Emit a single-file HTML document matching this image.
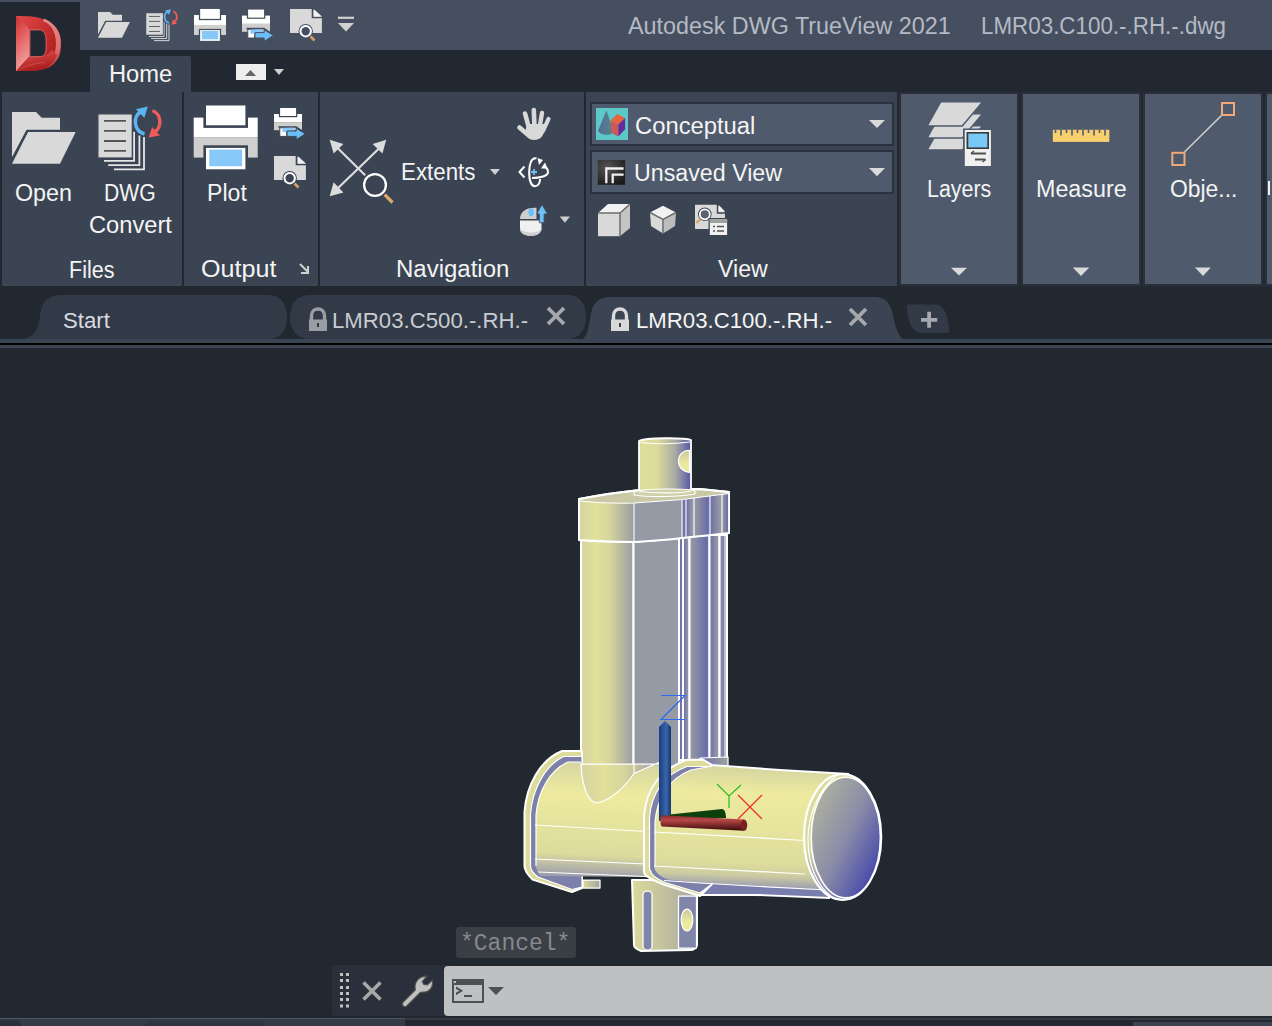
<!DOCTYPE html>
<html><head><meta charset="utf-8">
<style>
*{margin:0;padding:0;box-sizing:border-box}
html,body{width:1272px;height:1026px;overflow:hidden;background:#212830;font-family:"Liberation Sans",sans-serif}
.a{position:absolute}
.t{position:absolute;font-size:23px;line-height:23px;color:#f4f4f4;white-space:nowrap}
svg{position:absolute;overflow:visible}
</style></head><body>
<!-- title bar -->
<div class="a" style="left:0;top:0;width:1272px;height:50px;background:#464f60"></div>
<div class="a" style="left:0;top:50px;width:1272px;height:42px;background:#222832"></div>
<div class="a" style="left:0;top:2px;width:80px;height:48px;background:#222832"></div>
<div class="t" style="left:628px;top:15px;color:#b4bac4;transform:scaleX(1.015);transform-origin:0 0">Autodesk DWG TrueView 2021</div>
<div class="t" style="left:981px;top:15px;color:#b4bac4;transform:scaleX(0.973);transform-origin:0 0">LMR03.C100.-.RH.-.dwg</div>

<!-- home tab -->
<div class="a" style="left:90px;top:56px;width:101px;height:36px;background:#3b4453;border-radius:2px 2px 0 0"></div>
<div class="t" style="left:109px;top:63px;transform:scaleX(1.03);transform-origin:0 0">Home</div>
<div class="a" style="left:236px;top:64px;width:30px;height:16px;background:#eeeeee"></div>

<!-- ribbon panels -->
<div class="a" style="left:2px;top:92px;width:180px;height:194px;background:#3b4453"></div>
<div class="a" style="left:184px;top:92px;width:134px;height:194px;background:#3b4453"></div>
<div class="a" style="left:320px;top:92px;width:264px;height:194px;background:#3b4453"></div>
<div class="a" style="left:586px;top:92px;width:311px;height:194px;background:#3b4453"></div>
<div class="a" style="left:899px;top:92px;width:120px;height:194px;background:#4f5a6d;border:2px solid #2a2f3a"></div>
<div class="a" style="left:1021px;top:92px;width:120px;height:194px;background:#4f5a6d;border:2px solid #2a2f3a"></div>
<div class="a" style="left:1143px;top:92px;width:120px;height:194px;background:#4f5a6d;border:2px solid #2a2f3a"></div>
<div class="a" style="left:1265px;top:92px;width:20px;height:194px;background:#4f5a6d;border:2px solid #2a2f3a"></div>

<div class="t" style="left:15px;top:182px;transform:scaleX(1.013);transform-origin:0 0">Open</div>
<div class="t" style="left:104px;top:182px;transform:scaleX(0.92);transform-origin:0 0">DWG</div>
<div class="t" style="left:89px;top:214px;transform:scaleX(1.03);transform-origin:0 0">Convert</div>
<div class="t" style="left:69px;top:259px;transform:scaleX(0.935);transform-origin:0 0">Files</div>
<div class="t" style="left:207px;top:182px;transform:scaleX(1.004);transform-origin:0 0">Plot</div>
<div class="t" style="left:201px;top:258px;transform:scaleX(1.092);transform-origin:0 0">Output</div>
<div class="t" style="left:401px;top:161px;transform:scaleX(0.97);transform-origin:0 0">Extents</div>
<div class="t" style="left:396px;top:258px;transform:scaleX(1.043);transform-origin:0 0">Navigation</div>
<div class="t" style="left:718px;top:258px;transform:scaleX(1.007);transform-origin:0 0">View</div>
<div class="t" style="left:927px;top:178px;transform:scaleX(0.931);transform-origin:0 0">Layers</div>
<div class="t" style="left:1036px;top:178px;transform:scaleX(1.013);transform-origin:0 0">Measure</div>
<div class="t" style="left:1170px;top:178px;transform:scaleX(0.995);transform-origin:0 0">Obje...</div>

<!-- combos -->
<div class="a" style="left:590px;top:102px;width:304px;height:44px;background:#4f5a6d;border:2px solid #2b323d"></div>
<div class="a" style="left:590px;top:150px;width:304px;height:44px;background:#4f5a6d;border:2px solid #2b323d"></div>
<div class="t" style="left:635px;top:115px;transform:scaleX(1.034);transform-origin:0 0">Conceptual</div>
<div class="t" style="left:634px;top:162px;transform:scaleX(1.01);transform-origin:0 0">Unsaved View</div>

<div class="a" style="left:1268px;top:181px;width:2.2px;height:14px;background:#f0f0f0"></div>
<!-- doc tabs -->
<div class="a" style="left:0;top:339px;width:1272px;height:4px;background:#3b4453"></div>
<div class="a" style="left:0;top:343px;width:1272px;height:1.5px;background:#000"></div>
<div class="a" style="left:0;top:344.5px;width:1272px;height:3.5px;background:#3b4453"></div>
<svg width="1272" height="1026" style="left:0;top:0">
<path d="M20,339 C34,339 38,330 40,316 C42,302 47,295 62,295 L268,295 C281,295 287,304 287,317 C287,331 280,339 268,339 Z" fill="#323a47"/>
<path d="M290,317 C290,303 297,295 311,295 L567,295 C580,295 586,304 586,317 C586,331 579,339 566,339 L311,339 C297,339 290,331 290,317 Z" fill="#323a47"/>
<path d="M572,343 C585,343 588,333 590,319 C592,304 597,297 612,297 L874,297 C887,297 891,305 893,315 C896,330 900,343 912,343 Z" fill="#3b4453"/>
<path d="M907,304.5 L934,304.5 C944,304.5 949,315 949,332.8 L922,332.8 C912,332.8 907,322 907,304.5 Z" fill="#323a47"/>
</svg>
<div class="t" style="left:63px;top:309px;font-size:22.2px;color:#d9dce0">Start</div>
<div class="t" style="left:332px;top:309px;font-size:22.2px;color:#c8ccd2">LMR03.C500.-.RH.-</div>
<div class="t" style="left:636px;top:309px;font-size:22.2px">LMR03.C100.-.RH.-</div>

<!-- model -->
<svg width="1272" height="1026" style="left:0;top:0" viewBox="0 0 1272 1026">
<defs>
<linearGradient id="gcap" x1="0" x2="1" y1="0" y2="0">
<stop offset="0" stop-color="#e0de9c"/><stop offset="0.35" stop-color="#dcdb9b"/><stop offset="0.7" stop-color="#a8aaa4"/><stop offset="1" stop-color="#5456a8"/></linearGradient>
<linearGradient id="gcyl" x1="0" x2="1" y1="0" y2="0">
<stop offset="0" stop-color="#d6d4a2"/><stop offset="0.3" stop-color="#e2e09b"/><stop offset="0.55" stop-color="#d6d59c"/><stop offset="1" stop-color="#9a9ca4"/></linearGradient>
<linearGradient id="grib" x1="0" x2="1" y1="0" y2="0">
<stop offset="0" stop-color="#999ca4"/><stop offset="0.85" stop-color="#6a6ea8"/><stop offset="1" stop-color="#7a7eaa"/></linearGradient>
<linearGradient id="grib2" x1="0" x2="1" y1="0" y2="0">
<stop offset="0" stop-color="#6a6ea8"/><stop offset="1" stop-color="#a0a2a4"/></linearGradient>
<linearGradient id="gbodyL" gradientUnits="userSpaceOnUse" x1="590" y1="760" x2="585" y2="878">
<stop offset="0" stop-color="#d5d4a2"/><stop offset="0.3" stop-color="#eeeb9f"/><stop offset="0.55" stop-color="#e4e39d"/><stop offset="0.8" stop-color="#dcdb9c"/><stop offset="0.92" stop-color="#b3b3a8"/><stop offset="1" stop-color="#9a9bac"/></linearGradient>
<linearGradient id="gbody" gradientUnits="userSpaceOnUse" x1="750" y1="770" x2="746" y2="887">
<stop offset="0" stop-color="#d8d7a0"/><stop offset="0.2" stop-color="#eeeb9f"/><stop offset="0.5" stop-color="#e6e49d"/><stop offset="0.8" stop-color="#dddc9c"/><stop offset="0.9" stop-color="#cbcba2"/><stop offset="1" stop-color="#9c9db0"/></linearGradient>
<linearGradient id="grim" x1="0" y1="0" x2="0" y2="1"><stop offset="0" stop-color="#dddc9c"/><stop offset="0.6" stop-color="#d8d8a0"/><stop offset="0.85" stop-color="#9a9bb0"/><stop offset="1" stop-color="#7a7eac"/></linearGradient>
<linearGradient id="gend" x1="0.1" y1="0.15" x2="0.9" y2="0.85">
<stop offset="0" stop-color="#aeb0a0"/><stop offset="0.5" stop-color="#8a8ca8"/><stop offset="1" stop-color="#4648aa"/></linearGradient>
<linearGradient id="gpost" x1="0" x2="1" y1="0" y2="0">
<stop offset="0" stop-color="#dcdb9a"/><stop offset="1" stop-color="#a3a4a2"/></linearGradient>
<linearGradient id="gz" x1="0" x2="1" y1="0" y2="0">
<stop offset="0" stop-color="#173d80"/><stop offset="0.6" stop-color="#3a66aa"/><stop offset="1" stop-color="#16356e"/></linearGradient>
<linearGradient id="gx" x1="0" x2="0" y1="0" y2="1">
<stop offset="0" stop-color="#8a2a2a"/><stop offset="0.3" stop-color="#b84848"/><stop offset="1" stop-color="#3a0808"/></linearGradient>
<linearGradient id="ghole" x1="0" x2="0" y1="0" y2="1">
<stop offset="0" stop-color="#c8c89a"/><stop offset="0.6" stop-color="#ecea9e"/><stop offset="1" stop-color="#ecea9e"/></linearGradient>
</defs>
<g stroke="#ffffff" stroke-width="2" stroke-linejoin="round">
<!-- housing lower -->
<rect x="581" y="535" width="52.5" height="232" fill="url(#gcyl)"/>
<rect x="633.5" y="535" width="45.5" height="232" fill="#959aa5"/>
<rect x="679" y="535" width="4" height="225" fill="#7075aa"/>
<rect x="683" y="535" width="6.5" height="225" fill="url(#grib2)"/>
<rect x="689.5" y="535" width="20" height="225" fill="url(#grib)"/>
<rect x="709.5" y="535" width="10" height="225" fill="url(#grib2)"/>
<rect x="719.5" y="535" width="7.5" height="225" fill="url(#grib)"/>
<path d="M581,541 L581,764 M633.5,542 L633.5,764 M679,538 L679,760 M683,538 L683,760 M689.5,537 L689.5,760 M709.5,535 L709.5,760 M719.5,534 L719.5,758 M725,534 L725,757 M727,533 L727,757" fill="none" stroke-width="1.1"/>
<!-- top band -->
<path d="M579,499 C600,495 620,492 640,490 L700,489 L729,492 L729,533 C700,536 660,541 634,542 C615,542 595,541 579,540 Z" fill="#c9c9a6"/>
<path d="M579,501 C600,503 620,503.5 634,503 L634,542 C615,542 595,541 579,540 Z" fill="url(#gcyl)" stroke="none"/>
<path d="M634,503 L682,499.5 L682,538 L634,542 Z" fill="#959aa5" stroke="none"/>
<path d="M682,499.5 L686,499.0 L686,537.1 L682,537.4 Z" fill="#7075aa" stroke="none"/>
<path d="M686,499.0 L694,498.0 L694,536.3 L686,537.1 Z" fill="url(#grib2)" stroke="none"/>
<path d="M694,498.0 L710,495.9 L710,534.8 L694,536.3 Z" fill="url(#grib)" stroke="none"/>
<path d="M710,495.9 L722,494.4 L722,533.6 L710,534.8 Z" fill="url(#grib2)" stroke="none"/>
<path d="M722,494.4 L729,493.5 L729,533.0 L722,533.6 Z" fill="url(#grib)" stroke="none"/>

<path d="M579,499 C600,495 620,492 640,490 L700,489 L729,492 L729,533 C700,536 660,541 634,542 C615,542 595,541 579,540 Z" fill="none" stroke-width="1.8"/>
<path d="M580,501 C600,503 620,503.5 634,503 L682,499.5 L729,493.5" fill="none" stroke-width="1.1"/>
<path d="M634,503 L634,542 M682,499.5 L682,538 M686,499 L686,538 M694,498 L694,537 M710,496 L710,535 M722,494 L722,534" fill="none" stroke-width="1.1"/>
<!-- top cap -->
<path d="M639,441 C645,437.5 685,437.5 691,440 L691,491 L639,491 Z" fill="url(#gcap)" stroke-width="1.8"/>
<path d="M641,442.5 C655,444 675,444 690,442" fill="none" stroke-width="1.1"/>
<path d="M678.5,461 C678.5,454 684,450 689.5,450.5 L689.5,472.5 C684,472 678.5,468 678.5,461 Z" fill="url(#ghole)" stroke-width="1.25"/>
<path d="M634,492 C640,488.5 690,488 695,491 L695,494 C680,497 650,497.5 634,495 Z" fill="#cfcfa8" stroke-width="1.1"/>
<path d="M639,491.5 C655,493.5 680,493.5 691,491" fill="none" stroke-width="1.2"/>
<!-- base step -->
<path d="M700,758 L728,757 L728,766 L710,766 Z" fill="url(#grib2)" stroke-width="1.25"/>
<!-- body -->
<!-- lower post -->
<path d="M632,880 L700,880 L697,896 L697,945 C696,949 694,950 690,950 L641,951 C636,949 634,947 634,945 Z" fill="url(#gpost)"/>
<rect x="643" y="891" width="9" height="59" rx="4" fill="#8085aa" stroke-width="1.25"/>
<rect x="678.5" y="896" width="18" height="52" fill="#8085aa" stroke-width="1.25"/>
<ellipse cx="687" cy="920" rx="5.8" ry="11" fill="url(#ghole)" stroke-width="1.25"/>
<!-- left flange outer -->
<path d="M524.5,866 L524.5,812 C526.5,785 540,760 562,751 L582,751 L582,888 L572,892 L532.6,879.6 C528,875 524.5,870 524.5,866 Z" fill="#dcdb9c" stroke-width="2"/>
<path d="M530.5,866 L530.5,814 C532.5,788 545.5,765.5 563.5,756.5 L582,756.5 L582,887 L572,889.5 L538,877 C534,874 530.5,870 530.5,866 Z" fill="#7d81aa" stroke-width="1.2"/>
<!-- body left segment -->
<path d="M536,866 L536,815 C538,791 550,770 568,762 L581,762 L581,764 L640,765 L700,766 L700,884 L644,877 L540,876 C538,872 536,869 536,866 Z" fill="url(#gbodyL)" stroke="none"/>
<path d="M536,866 L536,815 C538,791 550,770 568,762 L581,762" fill="none" stroke-width="1.2"/>
<!-- saddle -->
<path d="M581,764 C582,790 590,803 597,803 C610,801 625,787 634,773.5 L660,762 L660,764 L634,764 Z" fill="url(#gcyl)" stroke-width="1.25"/>
<path d="M634,764 L634,773" fill="none" stroke-width="1.25"/>
<path d="M583,880 L600,880 L600,888 L583,888 Z" fill="url(#gpost)" stroke-width="1.25"/>
<path d="M535,825 L646,831.5" fill="none" stroke-width="1.25"/>
<path d="M535,859 L646,864" fill="none" stroke-width="1.25"/>
<path d="M538,872 L646,876.5" fill="none" stroke-width="1.25"/>
<!-- bottom purple band right -->
<path d="M660,878 L830,886 L830,897.5 L700,895 L663.6,884.5 Z" fill="#7a7eac" stroke="none"/>
<!-- middle flange outer -->
<path d="M644,872 L644,816 C646,790 660,770 686,760 L703,759.5 L712,765 L712,884 L700,896 L663.6,884.5 C652,880 644,876 644,872 Z" fill="#dcdb9c" stroke-width="2"/>
<path d="M649.5,870 L649.5,818 C651,793.5 664,774.5 687,766.5 L712,766.5 L712,884 L700,893 L665,882.5 C657,879 650.5,875 650.5,870 Z" fill="#7d81aa" stroke-width="1.2"/>
<!-- body right segment -->
<path d="M655,866 L655,822 C657,798.5 669,778.5 691,770 L712,766 L780,770 L849,774 L843,899 L827,890 L760,886.5 L700,883 L667,879.5 C659,876 654,871 654,866 Z" fill="url(#gbody)" stroke="none"/>
<path d="M655,866 L655,822 C657,798.5 669,778.5 691,770 L712,766" fill="none" stroke-width="1.2"/>
<path d="M664,880.5 L700,883 L760,886.5 L827,890" fill="none" stroke-width="1.2"/>
<path d="M710,765 L780,770 L849,774" fill="none" stroke-width="2"/>
<path d="M698,895 L760,895 L830,898" fill="none" stroke-width="1.8"/>
<path d="M654,832 L805,840.5" fill="none" stroke-width="1.25"/>
<path d="M654,866 L805,874" fill="none" stroke-width="1.25"/>
<!-- end cap -->
<ellipse cx="842.6" cy="837" rx="38.6" ry="62.8" fill="url(#grim)" stroke-width="2.2"/>
<path d="M836,776 C818,790 808,815 808,840 C808,865 817,886 832,897" fill="none" stroke-width="1.2"/>
<ellipse cx="845.8" cy="837.5" rx="34.6" ry="60.2" fill="url(#gend)" stroke-width="1.6"/>
</g>
<!-- axes -->
<path d="M659,821 L659,727 L665,721 L671,727 L671,821 Z" fill="url(#gz)"/>
<path d="M661,695.5 L685,695.5 L661,719.5 L685,719.5" fill="none" stroke="#2f6cf2" stroke-width="1.2"/>
<path d="M670,814.5 L722,809 C726,809 726,818 726,818 L670,818 Z" fill="#0e400e"/>
<path d="M662,815.3 L744,819.5 L744,830.8 L662,826.6 C660,826 660,816 662,815.3 Z" fill="url(#gx)"/>
<ellipse cx="744" cy="825.2" rx="3.2" ry="5.6" fill="#7a2020"/>
<path d="M717,784 L729,796 L741,785 M729,796 L729,808" fill="none" stroke="#22bb22" stroke-width="1.2"/>
<path d="M738,795 L762,819 M762,795 L738,819" fill="none" stroke="#ee2a2a" stroke-width="1.2"/>
</svg>

<!-- command line -->
<div class="a" style="left:456px;top:927px;width:120px;height:31px;background:#3a3f46;border-radius:3px"></div>
<div class="a" style="left:460px;top:933px;font:23px/23px 'Liberation Mono',monospace;color:#85888c">*Cancel*</div>
<div class="a" style="left:332px;top:965px;width:120px;height:51px;background:#2a303b;border-radius:4px"></div>
<div class="a" style="left:444px;top:966px;width:828px;height:50px;background:#bfc0c1;border-radius:4px 0 0 4px"></div>
<div class="a" style="left:0;top:1018px;width:405px;height:8px;background:#353c49;border-top:1.5px solid #4c5563"></div>
<div class="a" style="left:0;top:1020px;width:22px;height:6px;background:#2a313c;border-radius:0 12px 0 0"></div>
<div class="a" style="left:145px;top:1020px;width:120px;height:6px;background:#2f3642;border-radius:10px 10px 0 0"></div>
<div class="a" style="left:405px;top:1018px;width:867px;height:2px;background:#363b44"></div>
<div class="a" style="left:1133px;top:1022px;width:139px;height:4px;background:#3b4453"></div>

<svg width="1272" height="1026" style="left:0;top:0">
<defs>
<linearGradient id="lgA" x1="0" y1="0" x2="1" y2="1"><stop offset="0" stop-color="#c82a2a"/><stop offset="1" stop-color="#e05050"/></linearGradient>
<linearGradient id="lgB" x1="0" y1="0" x2="0" y2="1"><stop offset="0" stop-color="#e04a4a"/><stop offset="1" stop-color="#f09090"/></linearGradient>
<linearGradient id="lgC" x1="0" y1="0" x2="1" y2="0.3"><stop offset="0" stop-color="#a81818"/><stop offset="0.6" stop-color="#c02828"/><stop offset="1" stop-color="#f08a8a"/></linearGradient>
<radialGradient id="uvg" cx="0.35" cy="0.3" r="0.8"><stop offset="0" stop-color="#555555"/><stop offset="1" stop-color="#1a1a1a"/></radialGradient>
<linearGradient id="coneg" x1="0" x2="1"><stop offset="0" stop-color="#5a6a9a"/><stop offset="1" stop-color="#4a8a8a"/></linearGradient>
</defs>
<defs>
<linearGradient id="lgTop" x1="0" y1="0" x2="1" y2="0.6"><stop offset="0" stop-color="#e04a4a"/><stop offset="1" stop-color="#b01c1c"/></linearGradient>
<linearGradient id="lgLeft" x1="0" y1="0" x2="0.3" y2="1"><stop offset="0" stop-color="#c83030"/><stop offset="0.4" stop-color="#e25a5a"/><stop offset="1" stop-color="#f0a0a0"/></linearGradient>
<linearGradient id="lgRim" x1="0" y1="0" x2="0" y2="1"><stop offset="0" stop-color="#e88a8a"/><stop offset="0.6" stop-color="#dc7070"/><stop offset="1" stop-color="#b83a3a"/></linearGradient>
<linearGradient id="lgBot" x1="0" y1="0" x2="0.4" y2="1"><stop offset="0" stop-color="#e85858"/><stop offset="1" stop-color="#a81c1c"/></linearGradient>
</defs>
<path d="M16,16 L30,16.3 C40,17 50,20.5 57.7,29.9 C60,34 61,38 61,43.2 C61,49 60.5,53 59,56.4 C56,62 52,66 49.8,67 C45,69.5 39,70.5 33.2,70.7 L16,71 Z" fill="url(#lgTop)"/>
<path d="M16,16 L27.9,26.9 L29.5,30 L29.5,56.5 L16,71 Z" fill="url(#lgLeft)"/>
<path d="M44,18.5 C52,22 58,28 60,36 C61.5,42 61,50 59,56.4 C56,62 52,66 47,68 L45,64 C50,61 54,56 55.5,49 C56.5,43 56,36 53,30 C51,26 48,23 43,21 Z" fill="url(#lgRim)"/>
<path d="M16,71 L29.2,56.4 L41,56.4 C45,56 49,53.5 52,50 L57,55.5 C54,62 50,66 45,68.5 C40,70 36,70.6 33.2,70.7 Z" fill="url(#lgBot)"/>
<path d="M16,71 C25,66 35,63 45,62.5" fill="none" stroke="#f08080" stroke-width="0.6" opacity="0.6"/>
<path d="M29.9,29.9 L40.5,29.9 C44.5,31 46.1,35 46.1,40 L46.1,48 C46.1,52 44.5,56 41.2,56.5 L29.9,56.7 Z" fill="#222832" stroke="#e06868" stroke-width="0.9"/>
<g transform="translate(92.0,-44.0) scale(0.5)">
<path d="M12,112 L36,112 L41.7,117.7 L60,117.7 L60,130 L27,130 L12,158 Z" fill="#d9d9d9"/>
<path d="M28,132 L75.7,132 L60,163.7 L12,163.7 Z" fill="#d9d9d9"/>
<path d="M12,159.5 L27.2,130.8 L60,130.8" fill="none" stroke="#464f60" stroke-width="2.2"/>
</g>
<g transform="translate(97.0,-44.0) scale(0.5)">
<path d="M104,160.8 L134.1,160.8 L134.1,131.8 M108.2,165.1 L139.4,165.1 L139.4,135.4 M113.9,169.3 L144,169.3 L144,137" fill="none" stroke="#e6e6e6" stroke-width="1.8"/>
<rect x="97.9" y="113.9" width="34.4" height="44.1" fill="#d9d9d9" stroke="#464f60" stroke-width="1.2"/>
<path d="M104,120.9 H126 M104,130.8 H126 M104,141 H126 M104,150.9 H126" stroke="#555555" stroke-width="1.8"/>
<path d="M144.5,134 A12.5,12.5 0 0 1 141,111.5" fill="none" stroke="#5ab4f0" stroke-width="3.4"/>
<path d="M135.8,109.2 L147.9,106.4 L144.3,117.7 Z" fill="#5ab4f0"/>
<path d="M152.5,110.5 A12.5,12.5 0 0 1 154,132.5" fill="none" stroke="#f05a5a" stroke-width="3.4"/>
<path d="M148.6,137.5 L152.1,126.9 L159.9,135.4 Z" fill="#f05a5a"/>
</g>
<g transform="translate(0,0) scale(1)">
<rect x="194" y="15" width="32" height="10" fill="#ffffff"/>
<rect x="194" y="25" width="32" height="10" fill="#cfcfcf"/>
<rect x="199.5" y="8.3" width="21" height="11.2" fill="#ffffff" stroke="#464f60" stroke-width="1.3"/>
<rect x="199.5" y="29.5" width="21" height="12" fill="#ffffff" stroke="#464f60" stroke-width="1.3"/>
<rect x="201.8" y="31" width="16.4" height="8.3" fill="#88c8f8"/>
</g>
<g transform="translate(-32,-98.4)">
<rect x="274" y="114" width="28" height="8.3" fill="#ffffff"/>
<rect x="274" y="122.2" width="28" height="8" fill="#cfcfcf"/>
<rect x="279.5" y="107.4" width="17.2" height="9.2" fill="#ffffff" stroke="#464f60" stroke-width="1.2"/>
<path d="M278.5,127 L296,127 L302,131" fill="none" stroke="#464f60" stroke-width="1.6"/>
<rect x="279.8" y="127.8" width="7" height="8.6" fill="#ffffff" stroke="#464f60" stroke-width="1"/>
<rect x="282.3" y="127.8" width="12" height="4.2" fill="#88c8f8"/>
<path d="M287,131 L296.2,131 L296.2,128.2 L305.4,133.8 L296.2,139.8 L296.2,136.4 L287,136.4 Z" fill="#6cc0f8" stroke="#464f60" stroke-width="1"/>
</g>
<g transform="translate(16,-147)">
<path d="M274,156 L296.2,156 L305.9,164 L305.9,180.1 L274,180.1 Z" fill="#d9d9d9"/>
<path d="M296.5,155 L296.5,164.5 L307,164.5" fill="none" stroke="#464f60" stroke-width="1.6"/>
<path d="M298,156.3 L305.9,163.6 L298,163.6 Z" fill="#f0f0f0"/>
<circle cx="289.7" cy="178.2" r="7.2" fill="#464f60"/>
<circle cx="289.7" cy="178.2" r="5.2" fill="#464f60" stroke="#ffffff" stroke-width="2"/>
<path d="M294.5,183.5 L298.5,187.5" stroke="#d8a060" stroke-width="2.6"/>
</g>
<rect x="338" y="16.7" width="16" height="2.2" fill="#d0d0d0"/><path d="M338,23 L354,23 L346,31.4 Z" fill="#d0d0d0"/>
<path d="M245,76 L256,76 L250.5,70 Z" fill="#666666"/><path d="M274,69 L284,69 L279,75 Z" fill="#d0d0d0"/>
<g transform="translate(0,0) scale(1)">
<path d="M12,112 L36,112 L41.7,117.7 L60,117.7 L60,130 L27,130 L12,158 Z" fill="#d9d9d9"/>
<path d="M28,132 L75.7,132 L60,163.7 L12,163.7 Z" fill="#d9d9d9"/>
<path d="M12,159.5 L27.2,130.8 L60,130.8" fill="none" stroke="#3b4453" stroke-width="2.2"/>
</g>
<g transform="translate(0,0) scale(1)">
<path d="M104,160.8 L134.1,160.8 L134.1,131.8 M108.2,165.1 L139.4,165.1 L139.4,135.4 M113.9,169.3 L144,169.3 L144,137" fill="none" stroke="#e6e6e6" stroke-width="1.8"/>
<rect x="97.9" y="113.9" width="34.4" height="44.1" fill="#d9d9d9" stroke="#3b4453" stroke-width="1.2"/>
<path d="M104,120.9 H126 M104,130.8 H126 M104,141 H126 M104,150.9 H126" stroke="#555555" stroke-width="1.8"/>
<path d="M144.5,134 A12.5,12.5 0 0 1 141,111.5" fill="none" stroke="#5ab4f0" stroke-width="3.4"/>
<path d="M135.8,109.2 L147.9,106.4 L144.3,117.7 Z" fill="#5ab4f0"/>
<path d="M152.5,110.5 A12.5,12.5 0 0 1 154,132.5" fill="none" stroke="#f05a5a" stroke-width="3.4"/>
<path d="M148.6,137.5 L152.1,126.9 L159.9,135.4 Z" fill="#f05a5a"/>
</g>
<g transform="translate(-194.3,87.6) scale(2)">
<rect x="194" y="15" width="32" height="10" fill="#ffffff"/>
<rect x="194" y="25" width="32" height="10" fill="#cfcfcf"/>
<rect x="199.5" y="8.3" width="21" height="11.2" fill="#ffffff" stroke="#3b4453" stroke-width="1.3"/>
<rect x="199.5" y="29.5" width="21" height="12" fill="#ffffff" stroke="#3b4453" stroke-width="1.3"/>
<rect x="201.8" y="31" width="16.4" height="8.3" fill="#88c8f8"/>
</g>
<g transform="translate(0,0)">
<rect x="274" y="114" width="28" height="8.3" fill="#ffffff"/>
<rect x="274" y="122.2" width="28" height="8" fill="#cfcfcf"/>
<rect x="279.5" y="107.4" width="17.2" height="9.2" fill="#ffffff" stroke="#3b4453" stroke-width="1.2"/>
<path d="M278.5,127 L296,127 L302,131" fill="none" stroke="#3b4453" stroke-width="1.6"/>
<rect x="279.8" y="127.8" width="7" height="8.6" fill="#ffffff" stroke="#3b4453" stroke-width="1"/>
<rect x="282.3" y="127.8" width="12" height="4.2" fill="#88c8f8"/>
<path d="M287,131 L296.2,131 L296.2,128.2 L305.4,133.8 L296.2,139.8 L296.2,136.4 L287,136.4 Z" fill="#6cc0f8" stroke="#3b4453" stroke-width="1"/>
</g>
<g transform="translate(0,0)">
<path d="M274,156 L296.2,156 L305.9,164 L305.9,180.1 L274,180.1 Z" fill="#d9d9d9"/>
<path d="M296.5,155 L296.5,164.5 L307,164.5" fill="none" stroke="#3b4453" stroke-width="1.6"/>
<path d="M298,156.3 L305.9,163.6 L298,163.6 Z" fill="#f0f0f0"/>
<circle cx="289.7" cy="178.2" r="7.2" fill="#3b4453"/>
<circle cx="289.7" cy="178.2" r="5.2" fill="#3b4453" stroke="#ffffff" stroke-width="2"/>
<path d="M294.5,183.5 L298.5,187.5" stroke="#d8a060" stroke-width="2.6"/>
</g>
<path d="M300,264 L308,272 M308,266 L308,273 L301,273" fill="none" stroke="#d0d0d0" stroke-width="2"/>
<path d="M336,146.5 L365.2,175.2 M379,148.5 L336,190" stroke="#dcdcdc" stroke-width="2.2" fill="none"/>
<path d="M329.7,139.7 L343.4,144 L333.6,153.4 Z M386.3,139.7 L372.6,144 L382.4,153.4 Z M329.7,196.3 L333.6,182.2 L343.4,192.4 Z" fill="#dcdcdc"/>
<circle cx="375" cy="185" r="10.9" fill="none" stroke="#ffffff" stroke-width="2.3"/>
<path d="M384.7,194.7 L392.5,202.5" stroke="#dcaa68" stroke-width="3.2"/>
<path d="M490,169 L500,169 L495,175 Z" fill="#d0d0d0"/>
<g stroke="#d9d9d9" stroke-linecap="round" fill="#d9d9d9">
<path d="M525,113.5 L529,128" stroke-width="4.6"/>
<path d="M533.8,110 L534.5,127" stroke-width="4.6"/>
<path d="M542,113 L539.5,128" stroke-width="4.4"/>
<path d="M548.5,119 L543,131" stroke-width="4.2"/>
<path d="M519.5,127.5 L527,134" stroke-width="4.6"/>
<path d="M527,124 L544,124 L544,132 C543,137 539,140 534,140 C529,140 526,137 525,133 Z" stroke="none"/>
</g>
<g fill="none" stroke="#ffffff" stroke-width="2">
<path d="M536.5,158.3 C531.5,157 529.2,164 529.2,172 C529.2,181 531.5,186.2 534.8,186.2 C538,186.2 539.8,182.5 540.2,179"/>
<path d="M524.5,166.5 L519.5,172 L524.5,177.5"/>
<path d="M532,178 C540,178 548,176 548,172 C548,169 546,167 543,166"/>
</g>
<path d="M537.5,158 L543,160 L539,165 Z M545,162.5 L547.5,168.5 L541,168.5 Z" fill="#ffffff"/>
<path d="M531,172 H537 M534,169 V175" stroke="#6cc0f8" stroke-width="1.8"/>
<path d="M520,219 C520,212.5 525,207.8 535,207.8 L536.5,207.8 L536.5,219 Z" fill="#cfcfcf"/>
<path d="M520,220.5 L541.5,220.5 L541.5,228 C541.5,233 537,235.8 531,235.8 C524.5,235.8 520,233 520,228 Z" fill="#f0f0f0"/>
<path d="M520,228 C521,231 526,232.5 531,232.5 C537,232.5 540.5,231 541.5,228 L541.5,230 C540,234 536,235.8 531,235.8 C525.5,235.8 521,234 520,230 Z" fill="#cfcfcf"/>
<ellipse cx="531.2" cy="212.3" rx="2.8" ry="4" fill="#6cc0f8"/>
<path d="M542,204.4 L547.5,214 L544.1,214 L544.1,222.8 L539.3,222.8 L539.3,214 L536.6,214 Z" fill="#6cc0f8" stroke="#3b4453" stroke-width="0.8"/>
<path d="M559.8,216.6 L570,216.6 L564.9,222.8 Z" fill="#d0d0d0"/>
<rect x="596" y="108" width="32" height="32" fill="#5cc8c8"/>
<path d="M606.4,110.2 L598.3,130.2 C598,133.5 604,135 608,134.8 C611,134.6 613,133.5 613.5,131.5 Z" fill="url(#coneg)"/>
<path d="M610.5,120.5 L617.3,114.1 L625.1,118 L618.3,124.4 Z" fill="#e8643c"/>
<path d="M610.5,120.5 L618.3,124.4 L618.3,136.5 L611,132.7 Z" fill="#c85a5a"/>
<path d="M618.3,124.4 L625.1,118 L625.1,129.2 L618.3,136.5 Z" fill="#6a2a9a"/>
<rect x="597.8" y="160" width="27.3" height="24.8" fill="url(#uvg)"/>
<path d="M606.3,183.3 V168.5 H623.6 M612.7,183.3 V174.7 H623.6" fill="none" stroke="#f0f0f0" stroke-width="2.3"/>
<path d="M869,120 L885,120 L877,128 Z M869,168 L885,168 L877,176.3 Z" fill="#d9d9d9"/>
<path d="M598,213 L608,204 L630,204 L620,213 Z" fill="#f2f2f2"/>
<rect x="598" y="213" width="22" height="23.2" fill="#d9d9d9"/>
<path d="M620,213 L630,204 L630,228 L620,236.2 Z" fill="#c4c4c4"/>
<path d="M598,213 L620,213 L630,204 M620,213 L620,236.2" fill="none" stroke="#6e6e6e" stroke-width="1.5"/>
<path d="M650,212.5 L663,205.7 L676,212.5 L663,219.5 Z" fill="#f2f2f2"/>
<path d="M650,212.5 L663,219.5 L663,233.5 L651,226 Z" fill="#d9d9d9"/>
<path d="M663,219.5 L676,212.5 L675,226 L663,233.5 Z" fill="#bdbdbd"/>
<path d="M650,212.5 L663,219.5 L676,212.5 M663,219.5 L663,233.5" fill="none" stroke="#6e6e6e" stroke-width="1.5"/>
<path d="M695,204.7 L717,204.7 L725,212 L725,229 L695,229 Z" fill="#d9d9d9"/>
<path d="M717.5,204 L717.5,213 L726,213" fill="none" stroke="#3b4453" stroke-width="1.4"/>
<path d="M718.8,205 L725,211.5 L718.8,211.5 Z" fill="#f2f2f2"/>
<circle cx="704.8" cy="214.3" r="6.8" fill="#3b4453"/>
<circle cx="704.8" cy="214.3" r="5" fill="#5a6272" stroke="#ffffff" stroke-width="1.8"/>
<path d="M700.5,219 L696.5,223" stroke="#d8a060" stroke-width="2.2"/>
<rect x="708.5" y="218" width="19.5" height="18" fill="#3b4453"/>
<rect x="709.8" y="219.2" width="17.3" height="15.8" fill="#f0f0f0"/>
<rect x="709.8" y="219.2" width="17.3" height="3.8" fill="#a0a0a0"/>
<path d="M713,226.5 H715 M717,226.5 H724 M713,231 H715 M717,231 H724" stroke="#505050" stroke-width="1.6"/>
<path d="M940.8,125.7 L982.7,125.7 L962.3,150 L927.2,150 Z" fill="#d9d9d9" stroke="#4f5a6d" stroke-width="1.5"/>
<path d="M940.8,113.7 L982.7,113.7 L962.3,138 L927.2,138 Z" fill="#d9d9d9" stroke="#4f5a6d" stroke-width="1.5"/>
<path d="M940.8,101.7 L982.7,101.7 L962.3,126 L927.2,126 Z" fill="#d9d9d9" stroke="#4f5a6d" stroke-width="1.5"/>
<rect x="963" y="128.5" width="29" height="38.5" fill="#4f5a6d"/>
<rect x="964.8" y="130" width="26.1" height="36" fill="#f0f0f0"/>
<rect x="966.5" y="132" width="22.5" height="17" fill="#3a3a3a"/>
<rect x="968.3" y="133.6" width="19" height="13.8" fill="#78c8f8"/>
<path d="M971,153.5 H986 M975,159.5 H985.5" stroke="#505050" stroke-width="1.8"/>
<path d="M971,153.5 L974,151 M985.5,159.5 L982.5,162" stroke="#505050" stroke-width="1.6"/>
<path d="M951,267.8 L967,267.8 L959,275.6 Z M1072.8,267.5 L1089.3,267.5 L1081,276 Z M1195,267.5 L1210.8,267.5 L1203,276 Z" fill="#d9d9d9"/>
<rect x="1052.8" y="129.8" width="56.5" height="12.1" fill="#f8d070"/>
<path d="M1055.5,129.8 V133 M1061,129.8 V135.5 M1066.5,129.8 V133 M1072,129.8 V135.5 M1077.5,129.8 V133 M1083,129.8 V135.5 M1088.5,129.8 V133 M1094,129.8 V135.5 M1099.5,129.8 V133 M1105,129.8 V135.5" stroke="#4f5a6d" stroke-width="1.6"/>
<path d="M1184.5,152 L1222,115" stroke="#d0d0d0" stroke-width="1.6"/>
<rect x="1172.3" y="152.8" width="12.2" height="12.2" fill="none" stroke="#f0a878" stroke-width="2"/>
<rect x="1222" y="103" width="12" height="12" fill="none" stroke="#f0a878" stroke-width="2"/>
<path d="M311.5,320 V316 C311.5,311 315,309 318,309 C321,309 324.5,311 324.5,316 V320" fill="none" stroke="#9a9ea4" stroke-width="3.4"/>
<rect x="309" y="319.5" width="18" height="11.5" fill="#9a9ea4"/>
<rect x="317" y="323" width="2" height="4" fill="#323a47"/>
<path d="M613.5,320 V316 C613.5,311 617,309 620,309 C623,309 626.5,311 626.5,316 V320" fill="none" stroke="#d9d9d9" stroke-width="3.4"/>
<rect x="611" y="319.5" width="18" height="11.5" fill="#d9d9d9"/>
<rect x="619" y="323" width="2" height="4" fill="#3b4453"/>
<path d="M548,308 L564,324 M564,308 L548,324 M850,309 L866,325 M866,309 L850,325" stroke="#a5a8ad" stroke-width="3.8"/>
<path d="M921,319.8 H937.2 M929.1,311.7 V327.8" stroke="#a5a8ad" stroke-width="3.8"/>
<rect x="340" y="973" width="3" height="3" fill="#c0c0c0"/><rect x="346" y="973" width="3" height="3" fill="#c0c0c0"/><rect x="340" y="979" width="3" height="3" fill="#c0c0c0"/><rect x="346" y="979" width="3" height="3" fill="#c0c0c0"/><rect x="340" y="986" width="3" height="3" fill="#c0c0c0"/><rect x="346" y="986" width="3" height="3" fill="#c0c0c0"/><rect x="340" y="992" width="3" height="3" fill="#c0c0c0"/><rect x="346" y="992" width="3" height="3" fill="#c0c0c0"/><rect x="340" y="998" width="3" height="3" fill="#c0c0c0"/><rect x="346" y="998" width="3" height="3" fill="#c0c0c0"/><rect x="340" y="1004.5" width="3" height="3" fill="#c0c0c0"/><rect x="346" y="1004.5" width="3" height="3" fill="#c0c0c0"/>
<path d="M363.5,982.5 L380.5,999.5 M380.5,982.5 L363.5,999.5" stroke="#a8a8a8" stroke-width="3.6"/>
<path d="M405,1004 L420,989" stroke="#505050" stroke-width="6.4" stroke-linecap="round"/><path d="M417,992 C414,987 416,980 422,977.5 L425.5,977 L421.5,981.5 L423.5,985 L427.5,985.5 L432,981.5 C432.5,986.5 429.5,991 424,991.5 Z" fill="#505050" stroke="#505050" stroke-width="2.4"/><path d="M405,1004 L420,989" stroke="#c0c0c0" stroke-width="4" stroke-linecap="round"/>
<path d="M417,992 C414,987 416,980 422,977.5 L425.5,977 L421.5,981.5 L423.5,985 L427.5,985.5 L432,981.5 C432.5,986.5 429.5,991 424,991.5 Z" fill="#c0c0c0"/>
<rect x="453" y="980" width="30" height="22" fill="none" stroke="#4e5054" stroke-width="2"/>
<rect x="453" y="980" width="30" height="5" fill="#4e5054"/>
<rect x="453.8" y="981" width="2" height="2" fill="#d0d0d0"/>
<path d="M456,986.5 L463.2,990.8 L456,995.2 L456,992.6 L459.5,990.8 L456,989 Z" fill="#4e5054"/>
<rect x="464" y="995" width="8" height="2" fill="#4e5054"/>
<path d="M488,987 L504,987 L496,995 Z" fill="#4e5054"/>
</svg>
</body></html>
